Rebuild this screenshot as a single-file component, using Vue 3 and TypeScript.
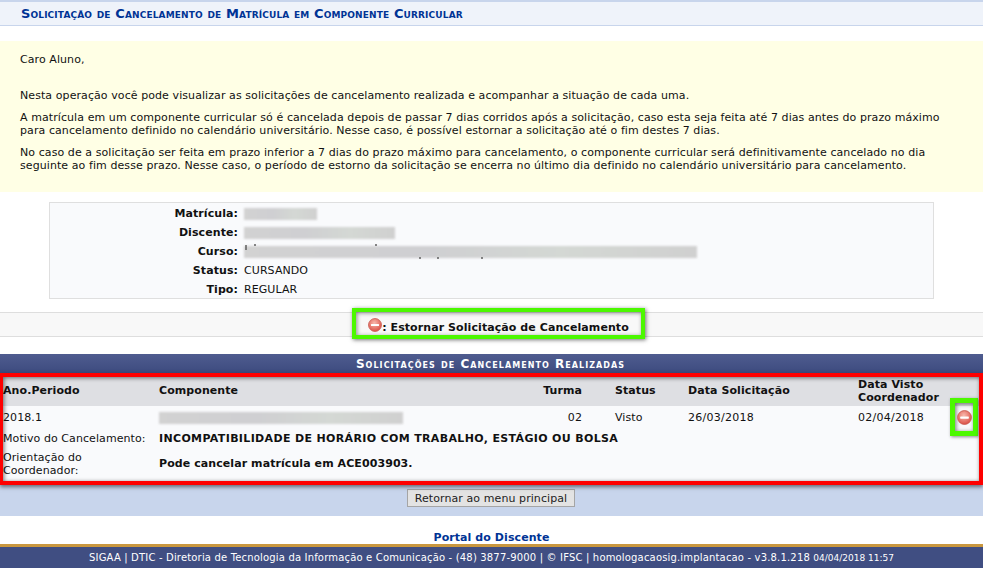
<script setup lang="ts">
const paragraphs: string[] = [
  'Nesta operação você pode visualizar as solicitações de cancelamento realizada e acompanhar a situação de cada uma.',
  'A matrícula em um componente curricular só é cancelada depois de passar 7 dias corridos após a solicitação, caso esta seja feita até 7 dias antes do prazo máximo para cancelamento definido no calendário universitário. Nesse caso, é possível estornar a solicitação até o fim destes 7 dias.',
  'No caso de a solicitação ser feita em prazo inferior a 7 dias do prazo máximo para cancelamento, o componente curricular será definitivamente cancelado no dia seguinte ao fim desse prazo. Nesse caso, o período de estorno da solicitação se encerra no último dia definido no calendário universitário para cancelamento.'
]
const specks: { x: number; y: number; h: number }[] = [
  { x: 1, y: -1, h: 5 },
  { x: 10, y: -2, h: 2 },
  { x: 131, y: -2, h: 2 },
  { x: 175, y: 11, h: 2 },
  { x: 193, y: 11, h: 2 },
  { x: 237, y: 11, h: 2 }
]
</script>

<template>
  <div class="page">
    <h2 class="title">Solicitação de Cancelamento de Matrícula em Componente Curricular</h2>

    <section class="notice">
      <p class="greet">Caro Aluno,</p>
      <p v-for="(p, i) in paragraphs" :key="i" class="para">{{ p }}</p>
    </section>

    <section class="info">
      <div class="info-row"><b>Matrícula:</b><span class="blur" style="width: 73px"></span></div>
      <div class="info-row"><b>Discente:</b><span class="blur" style="width: 151px"></span></div>
      <div class="info-row">
        <b>Curso:</b>
        <span class="curso">
          <span class="blur" style="width: 453px"></span>
          <i v-for="(s, i) in specks" :key="i" class="speck" :style="{ left: s.x + 'px', top: s.y + 'px', height: s.h + 'px' }"></i>
        </span>
      </div>
      <div class="info-row"><b>Status:</b><span>CURSANDO</span></div>
      <div class="info-row"><b>Tipo:</b><span>REGULAR</span></div>
    </section>

    <div class="legend">
      <div class="legend-item">
        <svg class="minus" width="14" height="14" viewBox="0 0 16 16"><defs><radialGradient id="m1" cx="45%" cy="35%" r="70%"><stop offset="0" stop-color="#f8b9ad"/><stop offset="1" stop-color="#d9483e"/></radialGradient></defs><circle cx="8" cy="8" r="7.4" fill="url(#m1)" stroke="#c85a50" stroke-width="0.9"/><rect x="3.4" y="6.8" width="9.2" height="2.4" rx="0.6" fill="#fff"/></svg>
        <b>: Estornar Solicitação de Cancelamento</b>
        <span class="mark-green"></span>
      </div>
    </div>

    <div class="caption">Solicitações de Cancelamento Realizadas</div>
    <div class="table-wrap">
      <table class="list">
        <colgroup>
          <col style="width: 156px" /><col style="width: 340px" /><col style="width: 83px" /><col style="width: 33px" />
          <col style="width: 73px" /><col style="width: 170px" /><col style="width: 91px" /><col />
        </colgroup>
        <thead>
          <tr>
            <th>Ano.Periodo</th><th>Componente</th><th class="right">Turma</th><th></th>
            <th>Status</th><th>Data Solicitação</th><th>Data Visto Coordenador</th><th></th>
          </tr>
        </thead>
        <tbody>
          <tr class="r1">
            <td>2018.1</td>
            <td><span class="blur" style="width: 244px"></span></td>
            <td class="right">02</td><td></td>
            <td>Visto</td><td class="date">26/03/2018</td><td class="date">02/04/2018</td>
            <td class="icon-cell">
              <span class="icon-box">
                <svg width="15" height="15" viewBox="0 0 16 16"><defs><radialGradient id="m2" cx="45%" cy="35%" r="70%"><stop offset="0" stop-color="#f8b9ad"/><stop offset="1" stop-color="#d9483e"/></radialGradient></defs><circle cx="8" cy="8" r="7.4" fill="url(#m2)" stroke="#c85a50" stroke-width="0.9"/><rect x="3.4" y="6.8" width="9.2" height="2.4" rx="0.6" fill="#fff"/></svg>
              </span>
            </td>
          </tr>
          <tr class="r2">
            <td>Motivo do Cancelamento:</td>
            <td colspan="7"><b class="caps">INCOMPATIBILIDADE DE HORÁRIO COM TRABALHO, ESTÁGIO OU BOLSA</b></td>
          </tr>
          <tr class="r3">
            <td class="wrap">Orientação do Coordenador:</td>
            <td colspan="7"><b>Pode cancelar matrícula em ACE003903.</b></td>
          </tr>
        </tbody>
      </table>
      <span class="mark-red"></span>
    </div>

    <div class="actions"><button class="back" type="button">Retornar ao menu principal</button></div>

    <a class="portal" href="#">Portal do Discente</a>
    <footer class="foot">SIGAA | DTIC - Diretoria de Tecnologia da Informação e Comunicação - (48) 3877-9000 | © IFSC | homologacaosig.implantacao - v3.8.1.218 <small>04/04/2018 11:57</small></footer>
  </div>
</template>

<style>
html, body { margin: 0; background: #fff; }
</style>

<style scoped>
.page {
  width: 983px;
  height: 568px;
  overflow: hidden;
  border-top: 2px solid #c8d5ec;
  box-sizing: border-box;
  font-family: "DejaVu Sans", sans-serif;
  font-size: 11px;
  letter-spacing: 0.08px;
  color: #111;
  display: flex;
  flex-direction: column;
}
.page > * { flex-shrink: 0; }
.title {
  margin: 0;
  height: 24px;
  box-sizing: border-box;
  padding: 0 0 0 21px;
  line-height: 23px;
  background: #eff3fa;
  border-bottom: 1px solid #c8d5ec;
  color: #003395;
  font-size: 13px;
  letter-spacing: 0.13px;
  font-weight: bold;
  font-variant: small-caps;
}
.notice {
  margin-top: 15px;
  height: 151px;
  box-sizing: border-box;
  padding: 12px 25px 0 20px;
  background: #ffffe5;
  line-height: 13px;
}
.notice p { margin: 0; }
.notice .greet { margin-bottom: 23px; }
.notice .para { margin-bottom: 9px; }
.info {
  margin: 10px 0 0 49px;
  width: 885px;
  height: 97px;
  box-sizing: border-box;
  border: 1px solid #dfdfdf;
  background: #f9fafc;
}
.info-row {
  height: 19px;
  box-sizing: border-box;
  padding-top: 2px;
  display: flex;
  align-items: center;
  gap: 6px;
}
.info-row b {
  width: 188px;
  text-align: right;
}
.blur {
  display: inline-block;
  height: 12px;
  background: linear-gradient(90deg, #d2d2d2, #cfcfd2 40%, #d4d8d4 70%, #d0d0d0);
  filter: blur(1px);
  vertical-align: middle;
}
.curso {
  position: relative;
  display: flex;
}
.speck {
  position: absolute;
  width: 2px;
  background: #555;
  opacity: 0.7;
}
.legend {
  margin-top: 13px;
  height: 25px;
  box-sizing: border-box;
  border-top: 1px solid #dedede;
  border-bottom: 1px solid #dedede;
  background: #f8f8f8;
  display: flex;
  justify-content: center;
  align-items: center;
}
.legend-item {
  position: relative;
  display: flex;
  align-items: center;
  left: 7px;
  top: 3px;
}
.minus { margin-top: -5px; }
.mark-green {
  position: absolute;
  left: -16px;
  top: -13px;
  right: -16px;
  bottom: -5px;
  border: 4px solid #4cf800;
  box-shadow: 1px 1px 4px rgba(0, 0, 0, 0.55), inset 1px 1px 4px rgba(0, 0, 0, 0.45);
}
.caption {
  margin-top: 17px;
  height: 19px;
  box-sizing: border-box;
  padding: 1px 2px 0 0;
  line-height: 19px;
  text-align: center;
  font-weight: bold;
  font-variant: small-caps;
  font-size: 12px;
  letter-spacing: 1.05px;
  color: #fff;
  background: linear-gradient(#4f5c8f, #3d4b7f);
}
.table-wrap {
  position: relative;
  height: 112px;
  box-sizing: border-box;
  padding: 4px 4px 4px 3px;
  background: #f9fafc;
}
.list {
  width: 976px;
  table-layout: fixed;
  border-collapse: collapse;
  font-size: 11px;
  color: #111;
}
.list th, .list td {
  padding: 0;
  text-align: left;
  vertical-align: middle;
  font-weight: normal;
}
.list th { font-weight: bold; background: #dedfe3; height: 27px; padding-bottom: 2px; line-height: 13px; }
.list .right { text-align: right; }
.list td.date { letter-spacing: 0.25px; }
.caps { letter-spacing: 0.35px; }
.r1 td { height: 22px; }
.r2 td { height: 20px; }
.list .r3 td { height: 31px; padding-bottom: 2px; line-height: 13px; }
.list .r3 td.wrap { padding-right: 20px; }
.list td.icon-cell { text-align: center; }
.icon-box {
  position: absolute;
  right: 5px;
  top: 25px;
  width: 28px;
  height: 38px;
  box-sizing: border-box;
  border: 5px solid #4cf800;
  box-shadow: 1px 1px 3px rgba(0, 0, 0, 0.45), inset 1px 1px 4px rgba(0, 0, 0, 0.55);
  display: flex;
  align-items: center;
  justify-content: center;
}
.mark-red {
  position: absolute;
  inset: 0;
  border: 4px solid #fe0000;
  border-left-width: 3px;
  box-shadow: 0 2px 4px rgba(0, 0, 0, 0.5), inset 1px 1px 4px rgba(0, 0, 0, 0.55);
  pointer-events: none;
}
.actions {
  height: 31px;
  background: #c8d5ec;
  display: flex;
  justify-content: center;
  padding-top: 4px;
  box-sizing: border-box;
}
.back {
  width: 168px;
  height: 18px;
  margin: 0 1px 0 0;
  padding: 0;
  font: 11px "DejaVu Sans", sans-serif;
  letter-spacing: 0.08px;
  color: #222;
  background: #e3e3e3;
  border: 1px solid #a5a5a5;
}
.portal {
  display: block;
  margin-top: 15px;
  height: 13px;
  line-height: 13px;
  text-align: center;
  color: #003395;
  font-weight: bold;
  text-decoration: none;
}
.foot {
  flex: 1;
  border-top: 3px solid #c9973f;
  background: #404e82;
  color: #fff;
  text-align: center;
  line-height: 21px;
  font-size: 10px;
  letter-spacing: 0.17px;
}
.foot small { font-size: 9px; letter-spacing: 0; }
</style>
